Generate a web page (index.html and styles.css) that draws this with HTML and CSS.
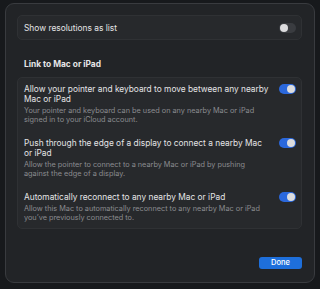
FILE: index.html
```html
<!DOCTYPE html>
<html>
<head>
<meta charset="utf-8">
<link rel="stylesheet" href="styles.css">
</head>
<body>
<div class="window">
  <div class="card single">
    <span class="label">Show resolutions as list</span>
    <span class="toggle off"><span class="knob"></span></span>
  </div>
  <div class="heading">Link to Mac or iPad</div>
  <div class="card list">
    <div class="row">
      <div class="text">
        <div class="title">Allow your pointer and keyboard to move between any nearby Mac or iPad</div>
        <div class="sub">Your pointer and keyboard can be used on any nearby Mac or iPad signed in to your iCloud account.</div>
      </div>
      <span class="toggle on"><span class="knob"></span></span>
    </div>
    <div class="row">
      <div class="text">
        <div class="title">Push through the edge of a display to connect a nearby Mac or iPad</div>
        <div class="sub">Allow the pointer to connect to a nearby Mac or iPad by pushing against the edge of a display.</div>
      </div>
      <span class="toggle on"><span class="knob"></span></span>
    </div>
    <div class="row">
      <div class="text">
        <div class="title">Automatically reconnect to any nearby Mac or iPad</div>
        <div class="sub">Allow this Mac to automatically reconnect to any nearby Mac or iPad you’ve previously connected to.</div>
      </div>
      <span class="toggle on"><span class="knob"></span></span>
    </div>
  </div>
  <div class="footer">
    <button class="done">Done</button>
  </div>
</div>
</body>
</html>
```
FILE: styles.css
```css
html, body {
  margin: 0;
  padding: 0;
  background: #17191c;
  width: 320px;
  height: 289px;
  overflow: hidden;
  font-family: Inter, "Liberation Sans", sans-serif;
  -webkit-font-smoothing: antialiased;
}
.window {
  box-sizing: border-box;
  margin: 3px 5px 0 5px;
  height: 280px;
  border: 1px solid #393b3f;
  border-radius: 9px;
  background: #222427;
  padding: 11px 12px 0 11px;
  display: flex;
  flex-direction: column;
}
.card {
  background: #27292c;
  border: 1px solid #2f3134;
  border-radius: 5px;
}
.single {
  box-sizing: border-box;
  height: 25px;
  display: flex;
  align-items: center;
  justify-content: space-between;
  padding: 0 5px 0 6px;
}
.label {
  color: #e4e4e6;
  font-size: 8.4px;
}
.heading {
  color: #e6e6e8;
  font-size: 8.4px;
  font-weight: 700;
  line-height: 10px;
  margin: 19px 0 8px 7px;
}
.list {
  padding: 6px 5px 6px 6px;
}
.row {
  display: flex;
  align-items: flex-start;
  justify-content: space-between;
}
.row + .row {
  margin-top: 14.5px;
}
.text {
  width: 250px;
}
.title {
  color: #e4e4e6;
  font-size: 8.35px;
  line-height: 10px;
  max-width: 247px;
}
.sub {
  color: #8b8c90;
  font-size: 7.3px;
  line-height: 9px;
  margin-top: 1.5px;
  max-width: 245px;
}
.toggle {
  box-sizing: border-box;
  width: 17px;
  height: 10px;
  border-radius: 5px;
  display: flex;
  align-items: center;
  padding: 1px;
  flex: none;
}
.toggle.on {
  background: #2b68dc;
  justify-content: flex-end;
}
.toggle.off {
  background: #3a3c40;
  justify-content: flex-start;
}
.knob {
  width: 8px;
  height: 8px;
  border-radius: 50%;
  background: #dcdcde;
}
.footer {
  display: flex;
  justify-content: flex-end;
  margin-top: 28px;
}
.done {
  width: 43px;
  height: 12px;
  border: none;
  border-radius: 3px;
  background: #1e6fdb;
  color: #ffffff;
  font-family: Inter, "Liberation Sans", sans-serif;
  font-size: 7.5px;
  font-weight: 500;
  padding: 0;
  line-height: 12px;
}
```
